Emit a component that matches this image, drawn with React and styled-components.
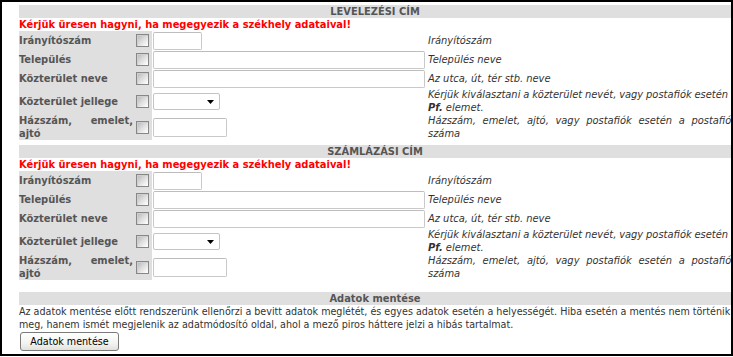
import React from "react";
import styled, { createGlobalStyle } from "styled-components";

const GlobalStyle = createGlobalStyle`
  html, body {
    margin: 0;
    padding: 0;
    background: #fff;
  }
  body {
    font-family: "DejaVu Sans Condensed", "DejaVu Sans", sans-serif;
    font-size: 11px;
    color: #333;
  }
`;

const sections = [
  { title: "Levelezési cím", key: "lev" },
  { title: "Számlázási cím", key: "szam" },
];

export default function App() {
  return (
    <>
      <GlobalStyle />
      <Frame>
        <Content>
          {sections.map((s, i) => (
            <Section key={s.key} $gap={i === 0 ? 5 : 12}>
              <SectionHeader>{s.title}</SectionHeader>
              <Warning>Kérjük üresen hagyni, ha megegyezik a székhely adataival!</Warning>

              <FieldRow $h={19}>
                <Label>Irányítószám</Label>
                <CheckCell><Check /></CheckCell>
                <InputCell><TextInput $w={49} /></InputCell>
                <Desc>Irányítószám</Desc>
              </FieldRow>

              <FieldRow $h={19}>
                <Label>Település</Label>
                <CheckCell><Check /></CheckCell>
                <InputCell><TextInput $w={272} /></InputCell>
                <Desc>Település neve</Desc>
              </FieldRow>

              <FieldRow $h={19}>
                <Label>Közterület neve</Label>
                <CheckCell><Check /></CheckCell>
                <InputCell><TextInput $w={272} /></InputCell>
                <Desc>Az utca, út, tér stb. neve</Desc>
              </FieldRow>

              <FieldRow $h={26}>
                <Label>Közterület jellege</Label>
                <CheckCell><Check /></CheckCell>
                <InputCell>
                  <SelectBox>
                    <svg width="7" height="4" viewBox="0 0 7 4">
                      <path d="M0 0h7L3.5 4z" fill="#000" />
                    </svg>
                  </SelectBox>
                </InputCell>
                <Desc>
                  <DescLine $justify>
                    Kérjük kiválasztani a közterület nevét, vagy postafiók esetén a
                  </DescLine>
                  <DescLine>
                    <b>Pf.</b> elemet.
                  </DescLine>
                </Desc>
              </FieldRow>

              <FieldRow $h={26}>
                <Label $justify>Házszám, emelet, ajtó</Label>
                <CheckCell><Check /></CheckCell>
                <InputCell><TextInput $w={74} $h={19} /></InputCell>
                <Desc>
                  <DescLine $justify>
                    Házszám, emelet, ajtó, vagy postafiók esetén a postafiók
                  </DescLine>
                  <DescLine>száma</DescLine>
                </Desc>
              </FieldRow>
            </Section>
          ))}

          <SectionHeader $case="none">Adatok mentése</SectionHeader>
          <Notice>
            <NoticeLine>
              Az adatok mentése előtt rendszerünk ellenőrzi a bevitt adatok meglétét, és egyes
              adatok esetén a helyességét. Hiba esetén a mentés nem történik
            </NoticeLine>
            <NoticeLine>
              meg, hanem ismét megjelenik az adatmódosító oldal, ahol a mező piros háttere jelzi a
              hibás tartalmat.
            </NoticeLine>
          </Notice>
          <SaveButton type="button">Adatok mentése</SaveButton>
        </Content>
      </Frame>
    </>
  );
}

const Frame = styled.div`
  box-sizing: border-box;
  width: 733px;
  height: 356px;
  border: 2px solid #000;
  padding: 3px 0 0 17px;
  overflow: hidden;
`;

const Content = styled.div`
  width: 712px;
`;

const Section = styled.div`
  margin-bottom: ${(p) => p.$gap}px;
`;

const SectionHeader = styled.div`
  height: 13px;
  line-height: 13px;
  background: #dfdfdf;
  color: #555;
  font-weight: bold;
  text-align: center;
  text-transform: ${(p) => (p.$case === "none" ? "none" : "uppercase")};
`;

const Warning = styled.div`
  height: 13px;
  line-height: 13px;
  color: #f00;
  font-weight: bold;
  white-space: nowrap;
`;

const FieldRow = styled.div`
  display: grid;
  grid-template-columns: 115px 18px 275px 310px;
  height: ${(p) => p.$h}px;
  align-items: center;
`;

const Label = styled.div`
  align-self: stretch;
  display: flex;
  align-items: center;
  background: #dfdfdf;
  color: #555;
  font-weight: bold;
  line-height: 13px;
  text-align: ${(p) => (p.$justify ? "justify" : "left")};
  padding-right: 1px;
`;

const CheckCell = styled.div`
  align-self: stretch;
  display: flex;
  align-items: center;
  padding-left: 2px;
  background: #dfdfdf;
`;

const Check = styled.span`
  box-sizing: border-box;
  width: 13px;
  height: 13px;
  border: 1px solid #878787;
  background: linear-gradient(135deg, #b4b4b4 0%, #dadada 45%, #f7f7f7 85%, #fff 100%);
  box-shadow: inset 1px 1px 0 #cfcfcf;
`;

const InputCell = styled.div`
  display: flex;
  align-items: center;
  padding-left: 1px;
`;

const TextInput = styled.input`
  box-sizing: border-box;
  width: ${(p) => p.$w}px;
  height: ${(p) => p.$h || 18}px;
  margin: 0;
  padding: 0 2px;
  border: 1px solid #c9c9c9;
  border-top-color: #bdbdbd;
  border-radius: 2px;
  background: #fff;
  font: inherit;
  outline: none;
`;

const SelectBox = styled.div`
  box-sizing: border-box;
  width: 67px;
  height: 17px;
  border: 1px solid #c4c4c4;
  border-radius: 2px;
  background: #fff;
  display: flex;
  align-items: center;
  justify-content: flex-end;
  padding-right: 5px;

  svg {
    margin-top: 1px;
  }
`;

const Desc = styled.div`
  font-style: italic;
  color: #333;
  line-height: 13px;
  padding-left: 1px;
  white-space: nowrap;
`;

const DescLine = styled.div`
  white-space: nowrap;
  text-align: ${(p) => (p.$justify ? "justify" : "left")};
  text-align-last: ${(p) => (p.$justify ? "justify" : "auto")};
  word-spacing: ${(p) => (p.$justify ? "-1.5px" : "normal")};

  b {
    font-weight: bold;
  }
`;

const Notice = styled.div`
  font-size: 10.65px;
  line-height: 13px;
  color: #333;
`;

const NoticeLine = styled.div`
  white-space: nowrap;
`;

const SaveButton = styled.button`
  box-sizing: border-box;
  display: block;
  width: 99px;
  height: 19px;
  margin: 1px 0 0 1px;
  padding: 0;
  border: 1px solid #7a7a7a;
  border-radius: 3px;
  background: linear-gradient(#ffffff, #f3f3f0 60%, #e1e1dc);
  color: #000;
  font-family: inherit;
  font-size: 10.65px;
  line-height: 17px;
  cursor: pointer;
`;
